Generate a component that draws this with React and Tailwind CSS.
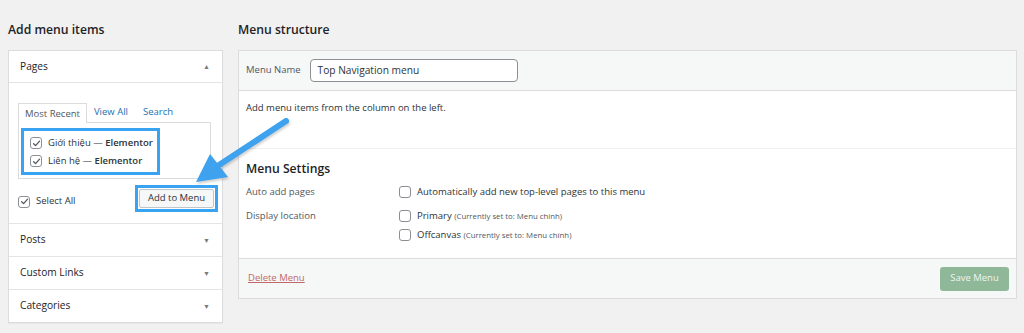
import React from 'react';

const Check = ({ checked = false }) => (
  <span className="inline-flex items-center justify-center w-[12px] h-[12px] rounded-[3px] border border-[#8c8f94] bg-white shrink-0">
    {checked && (
      <svg width="9" height="9" viewBox="0 0 10 10" fill="none">
        <path d="M1.8 5.2 L4 7.4 L8.4 2.4" stroke="#50575e" strokeWidth="1.4" strokeLinecap="round" strokeLinejoin="round" />
      </svg>
    )}
  </span>
);

const Caret = ({ up = false }) => (
  <span className="text-[7px] text-[#787c82] leading-none">{up ? '▲' : '▼'}</span>
);

const Section = ({ title }) => (
  <div className="h-[33px] flex items-center justify-between pl-[11px] pr-[12px] border-t border-[#e4e4e6]">
    <span className="text-[10.2px] text-[#1d2327]">{title}</span>
    <Caret />
  </div>
);

export default function App() {
  return (
    <div className="relative min-h-[333px] bg-[#f1f1f1] text-[#2c3338]" style={{ fontFamily: '"Open Sans", "Noto Sans", sans-serif' }}>
      <div className="flex pl-[8px] pr-[7px] pt-[20px] gap-[15px]">
        {/* left column */}
        <div className="w-[215px] shrink-0">
          <h2 className="text-[12.2px] font-semibold h-[20px] leading-[20px] mb-[10px] text-[#1d2327]">Add menu items</h2>
          <div className="bg-white border border-[#dcdcde] shadow-[0_1px_1px_rgba(0,0,0,0.04)]">
            <div className="h-[32px] flex items-center justify-between pl-[11px] pr-[12px] border-b border-[#e4e4e6]">
              <span className="text-[10.2px] text-[#1d2327]">Pages</span>
              <Caret up />
            </div>
            <div className="pt-[19px] pb-[11px] pl-[9px] pr-[11px]">
              <div className="flex text-[9.5px] leading-[19px]">
                <div className="px-[6px] border border-b-0 border-[#dcdcde] bg-white relative top-[1px] text-[#50575e]">Most Recent</div>
                <div className="ml-[7px] text-[#2271b1]">View All</div>
                <div className="ml-[15px] text-[#2271b1]">Search</div>
              </div>
              <div className="border border-[#dcdcde] h-[57px] pt-[5px] pl-[2px]">
                <div className="w-[139px] border-[3px] border-[#3aa3f1] pt-[6px] pb-[5px] pl-[6px] flex flex-col gap-[6px]">
                  <div className="flex items-center gap-[6px] text-[9.5px] leading-[12px] whitespace-nowrap">
                    <Check checked />
                    <span>Giới thiệu — <b className="font-semibold">Elementor</b></span>
                  </div>
                  <div className="flex items-center gap-[6px] text-[9.5px] leading-[12px] whitespace-nowrap">
                    <Check checked />
                    <span>Liên hệ — <b className="font-semibold">Elementor</b></span>
                  </div>
                </div>
              </div>
              <div className="flex items-center justify-between mt-[6px]">
                <div className="flex items-center gap-[6px] text-[9.5px] mt-[6px]">
                  <Check checked />
                  <span>Select All</span>
                </div>
                <div className="border-[3px] border-[#3aa3f1] p-[1px] -mr-[7px]">
                  <div className="h-[19px] w-[75px] flex items-center justify-center bg-[#f6f7f7] border border-[#c3c4c7] rounded-[2px] text-[9.5px] text-[#2c3338]">Add to Menu</div>
                </div>
              </div>
            </div>
            <Section title="Posts" />
            <Section title="Custom Links" />
            <Section title="Categories" />
          </div>
        </div>

        {/* right column */}
        <div className="flex-1">
          <h2 className="text-[12.2px] font-semibold h-[20px] leading-[20px] mb-[10px] text-[#1d2327]">Menu structure</h2>
          <div className="bg-white border border-[#dcdcde]">
            <div className="h-[40px] bg-[#f6f7f7] border-b border-[#dcdcde] flex items-center pl-[7px]">
              <span className="text-[9.5px] text-[#50575e]">Menu Name</span>
              <div className="ml-[9px] w-[208px] h-[23px] border border-[#8c8f94] rounded-[4px] bg-white flex items-center px-[7px] text-[10.2px] text-[#2c3338]">Top Navigation menu</div>
            </div>
            <div className="px-[7px]">
              <p className="text-[9.5px] pt-[10px] h-[57px]">Add menu items from the column on the left.</p>
            </div>
            <div className="border-t border-[#f0f0f1]"></div>
            <div className="px-[7px] pt-[10px] h-[109px]">
              <h3 className="text-[12.2px] font-semibold text-[#1d2327] leading-[20px]">Menu Settings</h3>
              <div className="flex text-[9.5px] mt-[3px]">
                <div className="w-[153px] text-[#50575e] leading-[20px]">Auto add pages</div>
                <div className="flex items-center gap-[6px] leading-[20px]">
                  <Check />
                  <span>Automatically add new top-level pages to this menu</span>
                </div>
              </div>
              <div className="flex text-[9.5px] mt-[4px]">
                <div className="w-[153px] text-[#50575e] leading-[20px]">Display location</div>
                <div className="flex flex-col">
                  <div className="flex items-center gap-[6px] h-[19px] leading-[19px]">
                    <Check />
                    <span>Primary <span className="text-[7.8px] leading-[19px] text-[#50575e]">(Currently set to: Menu chính)</span></span>
                  </div>
                  <div className="flex items-center gap-[6px] h-[19px] leading-[19px]">
                    <Check />
                    <span>Offcanvas <span className="text-[7.8px] leading-[19px] text-[#50575e]">(Currently set to: Menu chính)</span></span>
                  </div>
                </div>
              </div>
            </div>
            <div className="h-[40px] bg-[#f6f7f7] border-t border-[#dcdcde] flex items-center justify-between pl-[9px] pr-[7px]">
              <span className="text-[9.5px] text-[#c0696a] underline">Delete Menu</span>
              <div className="h-[24px] w-[69px] justify-center rounded-[3px] bg-[#8fb899] text-[#eef5ef] text-[9.5px] flex items-center">Save Menu</div>
            </div>
          </div>
        </div>
      </div>

      {/* annotation arrow */}
      <svg className="absolute left-0 top-0 pointer-events-none" width="1024" height="333" style={{ filter: 'drop-shadow(1px 2px 1px rgba(0,0,0,0.18))' }}>
        <line x1="286" y1="121" x2="216" y2="167" stroke="#3ea2ef" strokeWidth="6" strokeLinecap="round" />
        <polygon points="196,182 210,154 228,177" fill="#3ea2ef" />
      </svg>
    </div>
  );
}
